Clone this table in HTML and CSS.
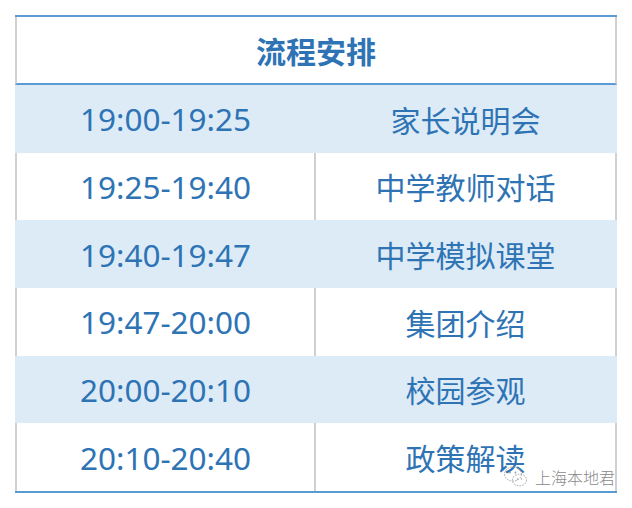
FILE: index.html
```html
<!DOCTYPE html>
<html lang="zh">
<head>
<meta charset="utf-8">
<link rel="stylesheet" href="styles.css">
</head>
<body>
<div class="page">
  <div class="schedule">
    <div class="head">流程安排</div>
    <div class="row shade"><div class="cell time">19:00-19:25</div><div class="cell item">家长说明会</div></div>
    <div class="row"><div class="cell time">19:25-19:40</div><div class="cell item">中学教师对话</div></div>
    <div class="row shade"><div class="cell time">19:40-19:47</div><div class="cell item">中学模拟课堂</div></div>
    <div class="row"><div class="cell time">19:47-20:00</div><div class="cell item">集团介绍</div></div>
    <div class="row shade"><div class="cell time">20:00-20:10</div><div class="cell item">校园参观</div></div>
    <div class="row"><div class="cell time">20:10-20:40</div><div class="cell item">政策解读</div></div>
  </div>
  <div class="mark">
    <svg class="mark-icon" width="26" height="24" viewBox="0 0 26 24">
      <g fill="none" stroke="#9a9a9a" stroke-width="0.9" stroke-dasharray="1.6 1.2">
        <ellipse cx="10" cy="9" rx="8.5" ry="7"/>
        <ellipse cx="16.5" cy="15" rx="7" ry="5.8"/>
      </g>
      <g fill="#9a9a9a">
        <circle cx="7" cy="7.5" r="0.9"/>
        <circle cx="12.5" cy="7.5" r="0.9"/>
        <circle cx="14.5" cy="14" r="0.7"/>
        <circle cx="18.5" cy="14" r="0.7"/>
      </g>
    </svg>
    <span class="mark-text">上海本地君</span>
  </div>
</div>
</body>
</html>
```
FILE: styles.css
```css
html, body {
  margin: 0;
  padding: 0;
  background: #ffffff;
}
.page {
  position: relative;
  width: 632px;
  height: 508px;
  padding: 15px 0 0 15px;
  box-sizing: border-box;
}
.schedule {
  width: 602px;
  border-top: 2px solid #5b9bd5;
  border-bottom: 2px solid #5b9bd5;
  font-family: "Noto Sans", "Noto Sans CJK SC", sans-serif;
  color: #2e74b5;
}
.head {
  height: 66px;
  border-left: 2px solid #d0d0d0;
  border-right: 2px solid #d0d0d0;
  border-bottom: 2px solid #5b9bd5;
  display: flex;
  align-items: center;
  justify-content: center;
  font-family: "Noto Sans CJK SC", sans-serif;
  font-weight: 700;
  font-size: 30px;
}
.row {
  display: grid;
  grid-template-columns: 1fr 1fr;
  height: 67.67px;
  border-left: 2px solid #d0d0d0;
  border-right: 2px solid #d0d0d0;
  box-sizing: border-box;
}
.row.shade {
  background: #ddebf7;
  border-color: #ddebf7;
}
.cell {
  display: flex;
  align-items: center;
  justify-content: center;
}
.time {
  font-size: 31.5px;
  border-right: 2px solid #d0d0d0;
}
.shade .time {
  border-right-color: #ddebf7;
}
.item {
  font-family: "Noto Sans CJK SC", sans-serif;
  font-size: 30px;
}
.mark {
  position: absolute;
  left: 503px;
  top: 465px;
  display: flex;
  align-items: center;
  gap: 6px;
}
.mark-text {
  font-family: "Noto Sans CJK SC", sans-serif;
  font-weight: 300;
  font-size: 16px;
  color: #8a8a8a;
  text-shadow: 0 0 2px #ffffff, 0 0 2px #ffffff;
}
```
